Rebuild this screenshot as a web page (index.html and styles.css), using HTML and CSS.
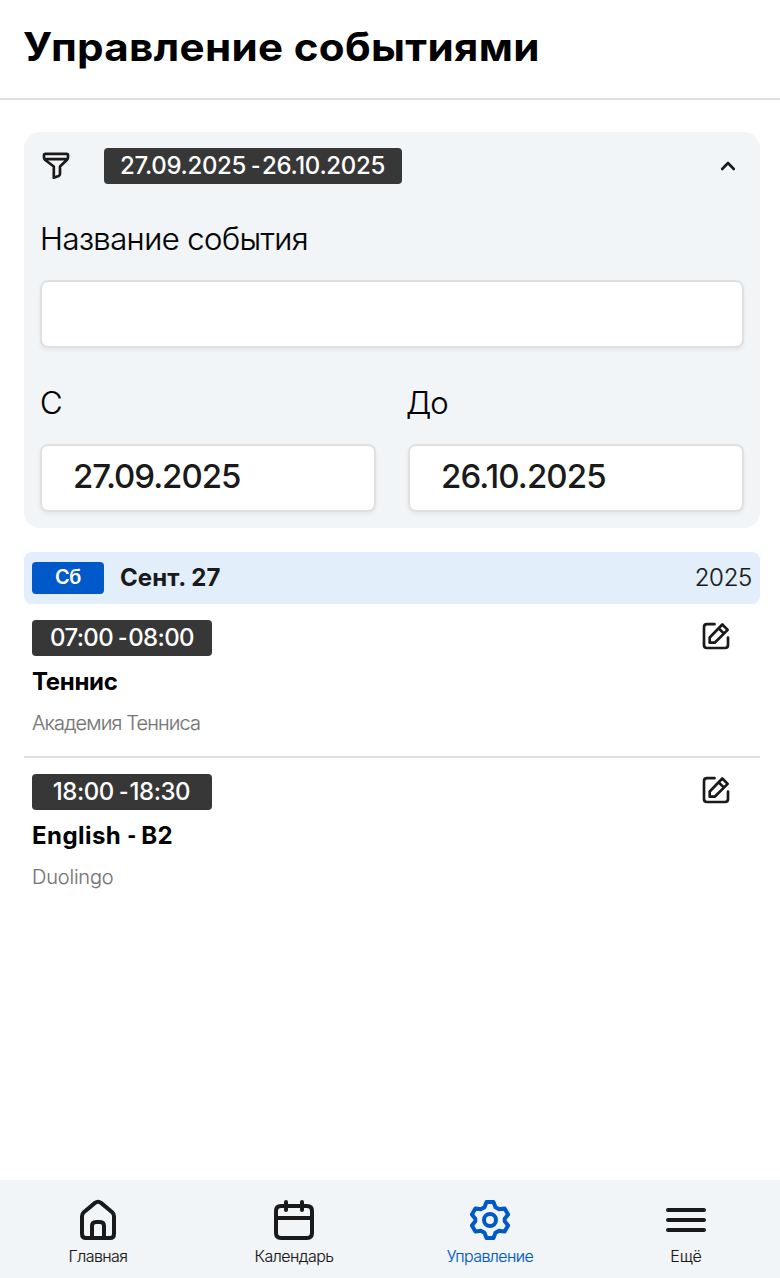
FILE: index.html
```html
<!DOCTYPE html>
<html lang="ru">
<head>
<meta charset="utf-8">
<title>Управление событиями</title>
<link rel="stylesheet" href="styles.css">
</head>
<body>
<header class="header"><h1 class="title">Управление событиями</h1></header>
<main class="main">
  <section class="filter">
    <div class="filter-head">
      <svg class="funnel" width="32" height="36" viewBox="0 0 32 36" fill="none" stroke="#1a1a1a" stroke-width="2.7" stroke-linejoin="round"><path d="M5.4 5.8H26.6Q28 5.8 28 7.3V9.5Q28 10.8 26.8 12L20 18.5V26Q20 27.3 18.6 28L13.8 29.7V18.5L5.2 12Q4 10.8 4 9.5V7.3Q4 5.8 5.4 5.8ZM4.2 11.2H27.8"/></svg>
      <span class="badge range">27.09.2025 <span class="dash">-</span>26.10.2025</span>
      <svg class="chevron" width="32" height="32" viewBox="0 0 32 32" fill="none" stroke="#1a1a1a" stroke-width="2.6" stroke-linecap="round" stroke-linejoin="round"><path d="M10.2 19L16 13L21.8 19"/></svg>
    </div>
    <label class="label name-label" for="name">Название события</label>
    <input class="field" id="name" type="text">
    <div class="dates">
      <div class="date"><label class="label" for="from">С</label><input class="field from" id="from" type="text" value="27.09.2025"></div>
      <div class="date"><label class="label to-label" for="to">До</label><input class="field to" id="to" type="text" value="26.10.2025"></div>
    </div>
  </section>
  <div class="day">
    <span class="weekday">Сб</span>
    <strong class="day-name">Сент. 27</strong>
    <span class="year">2025</span>
  </div>
  <article class="event">
    <div class="event-info">
      <span class="badge time">07:00 <span class="dash">-</span>08:00</span>
      <h2 class="event-name">Теннис</h2>
      <p class="place">Академия Тенниса</p>
    </div>
    <svg class="edit" width="32" height="32" viewBox="0 0 32 32" fill="none" stroke="#1a1a1a" stroke-width="2.7" stroke-linecap="round" stroke-linejoin="round"><path d="M14.5 4.2H7Q4 4.2 4 7.2V25Q4 28 7 28H25Q28 28 28 25V17.5M9.7 17.5L22.3 4.5L27.7 9.9L14.7 22.7H9.7ZM18.6 8.2L24 13.6"/></svg>
  </article>
  <article class="event">
    <div class="event-info">
      <span class="badge time late">18:00 <span class="dash">-</span>18:30</span>
      <h2 class="event-name english">English <span class="dash">-</span> B2</h2>
      <p class="place latin">Duolingo</p>
    </div>
    <svg class="edit" width="32" height="32" viewBox="0 0 32 32" fill="none" stroke="#1a1a1a" stroke-width="2.7" stroke-linecap="round" stroke-linejoin="round"><path d="M14.5 4.2H7Q4 4.2 4 7.2V25Q4 28 7 28H25Q28 28 28 25V17.5M9.7 17.5L22.3 4.5L27.7 9.9L14.7 22.7H9.7ZM18.6 8.2L24 13.6"/></svg>
  </article>
</main>
<nav class="nav">
  <a class="tab"><svg class="icon" viewBox="0 0 48 48"><path d="M8 20.2Q8 17.8 9.8 16.2L21 6.9Q24 4.6 27 6.9L38.2 16.2Q40 17.8 40 20.2V38Q40 42 36 42H12Q8 42 8 38ZM18 42V30Q18 26 22 26H26Q30 26 30 30V42"/></svg><span class="tab-text">Главная</span></a>
  <a class="tab"><svg class="icon" viewBox="0 0 48 48"><path d="M11 10H37Q42 10 42 15V37Q42 42 37 42H11Q6 42 6 37V15Q6 10 11 10ZM6 22H42M16 6V14M32 6V14"/></svg><span class="tab-text">Календарь</span></a>
  <a class="tab active"><svg class="icon gear" viewBox="0 0 48 48"><path d="M20.5 6H27.5L29.5 11.2L33.2 13.3L38.6 12.4L42.1 18.5L38.7 22.8V25.2L42.1 29.5L38.6 35.6L33.2 34.7L29.5 36.8L27.5 42H20.5L18.5 36.8L14.8 34.7L9.4 35.6L5.9 29.5L9.3 25.2V22.8L5.9 18.5L9.4 12.4L14.8 13.3L18.5 11.2Z"/><circle cx="24" cy="24" r="6"/></svg><span class="tab-text">Управление</span></a>
  <a class="tab"><svg class="icon" viewBox="0 0 48 48"><path d="M6 14H42M6 24H42M6 34H42"/></svg><span class="tab-text more">Ещё</span></a>
</nav>
</body>
</html>
```
FILE: styles.css
```css
* { box-sizing: border-box; }
body { margin: 0; height: 1278px; display: flex; flex-direction: column; background: #fff; color: #000; font-family: Inter, "Liberation Sans", sans-serif; font-weight: 300; }
svg { display: block; flex: none; }
.header { height: 100px; padding: 17px 24px 0; border-bottom: 2px solid #e0e0e0; }
.title { margin: 0 0 0 -1px; font-size: 39px; line-height: 60px; font-weight: 700; letter-spacing: .3px; white-space: nowrap; transform: scaleX(1.08); transform-origin: 0 0; }
.main { flex: 1; padding: 32px 20px 0 24px; }
.filter { height: 396px; padding: 16px; border-radius: 16px; background: #f2f5f8; }
.filter-head { display: flex; height: 36px; }
.badge { display: flex; align-items: center; justify-content: center; height: 36px; padding-bottom: 2px; border-radius: 4px; background: #373737; color: #fff; font-size: 24px; font-weight: 500; white-space: pre; }
.range { width: 298px; margin-left: 32px; padding-right: 1px; letter-spacing: -.33px; }
.badge .dash { display: inline-block; margin-left: -1px; transform: scaleX(.85); transform-origin: 0 0; }
.chevron { margin: 2px 0 0 auto; }
.label { display: block; height: 40px; font-size: 31px; line-height: 40px; }
.name-label { margin-top: 35px; letter-spacing: -.55px; -webkit-text-stroke: .2px #000; }
.date .label { -webkit-text-stroke: .2px #000; }
.to-label { margin-left: -2px; letter-spacing: -1px; }
.field { display: block; width: 100%; height: 68px; padding: 0 31px 4px; border: 2px solid #e0e0e0; border-radius: 8px; outline: 0; background: #fff; color: #1a1a1a; font: 450 33px Inter, sans-serif; letter-spacing: -1.05px; box-shadow: 0 2px 4px rgba(0, 0, 0, .06); }
.to { letter-spacing: -.9px; }
.name-label + .field { margin-top: 21px; }
.dates { display: grid; grid-template-columns: 1fr 1fr; gap: 32px; margin-top: 35px; }
.date .field { margin-top: 21px; }
.day { display: flex; align-items: center; height: 52px; margin-top: 24px; padding: 0 8px; border-radius: 8px; background: #e2eefa; color: #1a1a1a; font-size: 24px; }
.weekday { width: 72px; height: 32px; border-radius: 4px; background: #0059c8; color: #fff; font-size: 20px; font-weight: 600; line-height: 31px; text-align: center; letter-spacing: -.5px; }
.day-name { margin-left: 16px; padding-bottom: 2px; font-weight: 700; letter-spacing: .1px; }
.year { margin-left: auto; padding-bottom: 2px; letter-spacing: -.3px; -webkit-text-stroke: .2px #1a1a1a; }
.event { display: flex; justify-content: space-between; height: 154px; padding: 16px 28px 0 8px; }
.day + .event { border-bottom: 2px solid #e0e0e0; }
.time { width: 180px; letter-spacing: -.65px; }
.late { padding-right: 1px; letter-spacing: -.45px; }
.event-name { margin: 10px 0 0; font-size: 24px; line-height: 32px; font-weight: 700; letter-spacing: -.3px; white-space: nowrap; }
.english { letter-spacing: .45px; }
.english .dash { display: inline-block; margin: 0 -3px 0 -1px; transform: scaleX(.8); }
.place { margin: 11px 0 0; color: #757575; font-size: 20px; line-height: 28px; letter-spacing: -.88px; -webkit-text-stroke: .15px #757575; }
.latin { letter-spacing: -.2px; }
.nav { display: grid; grid-template-columns: repeat(4, 196px); height: 98px; background: #f2f5f8; }
.tab { display: flex; flex-direction: column; align-items: center; padding-top: 16px; color: #1a1a1a; }
.icon { width: 48px; height: 48px; fill: none; stroke: currentColor; stroke-width: 4; stroke-linecap: round; stroke-linejoin: round; }
.gear { margin-right: 1px; }
.active { color: #0059c8; }
.tab-text { font-size: 16px; line-height: 24px; letter-spacing: -.57px; white-space: nowrap; -webkit-text-stroke: .15px currentColor; }
.more { letter-spacing: -.1px; }
```
